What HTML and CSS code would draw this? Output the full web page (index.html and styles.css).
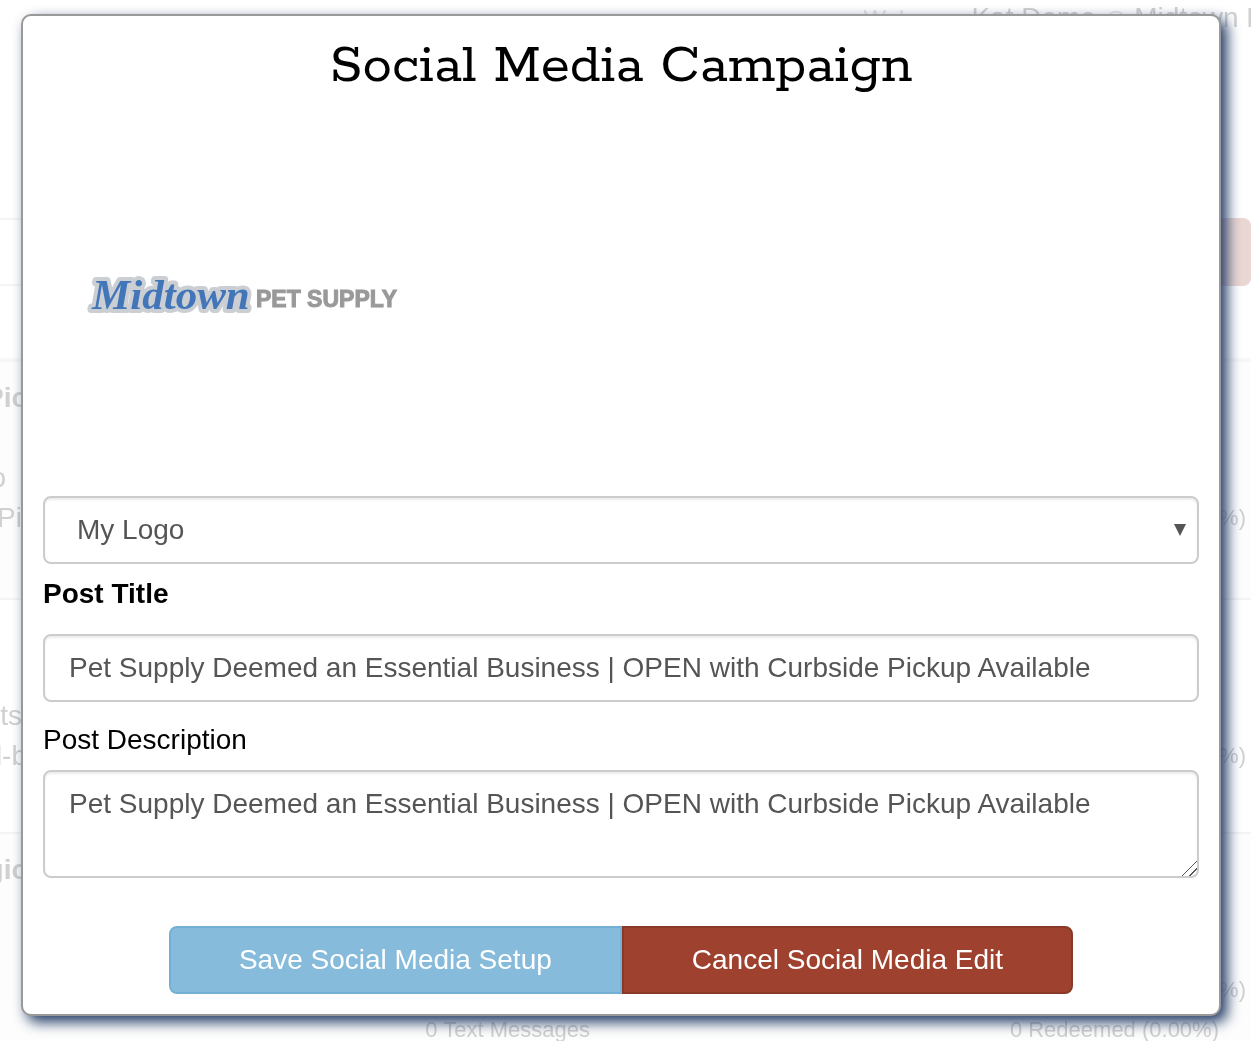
FILE: index.html
```
<!DOCTYPE html>
<html lang="en">
<head>
    <meta charset="UTF-8">
    <meta name="viewport" content="width=device-width, initial-scale=1.0">
    <title>Social Media Campaign</title>
    <link rel="stylesheet" href="styles.css">
</head>
<body>
    <!-- faded page behind the dialog -->
    <div class="backdrop" aria-hidden="true">
        <div class="welcome">
            <span class="greeting">Wel</span>
            <span>Kat Demo</span>
            <span class="at">@</span>
            <span class="store">Midtown P</span>
        </div>
        <div class="toolbar">
            <div class="toolbar-line"></div>
            <div class="toolbar-btn"></div>
        </div>
        <div class="campaign shaded first">
            <div class="row name"><span class="left wide">Pic</span></div>
            <div class="row"><span class="left short">o</span></div>
            <div class="row"><span class="left">Pi</span><span class="stat">%)</span></div>
        </div>
        <div class="campaign second">
            <div class="row"><span class="left">ts</span></div>
            <div class="row"><span class="left wide">l-b</span><span class="stat">%)</span></div>
        </div>
        <div class="campaign shaded third">
            <div class="row name"><span class="left wide">gic</span></div>
            <div class="row"><span class="left"></span><span class="stat">%)</span></div>
            <div class="totals"><span>0 Text Messages</span><span>0 Redeemed (0.00%)</span></div>
        </div>
    </div>

    <form class="modal" role="dialog" aria-labelledby="modalTitle">
        <h1 id="modalTitle">Social Media Campaign</h1>

        <svg class="logo" viewBox="0 0 360 360" role="img" aria-label="Midtown Pet Supply">
            <text class="logo-script" x="49" y="189">Midtown</text>
            <text class="logo-name" x="213" y="187">PET SUPPLY</text>
        </svg>

        <div class="select-wrap">
            <select class="field" aria-label="Image">
                <option>My Logo</option>
            </select>
        </div>

        <label class="title-label" for="postTitle">Post Title</label>
        <input class="field" type="text" id="postTitle" value="Pet Supply Deemed an Essential Business | OPEN with Curbside Pickup Available">

        <label class="desc-label" for="postDesc">Post Description</label>
        <textarea class="field" id="postDesc">Pet Supply Deemed an Essential Business | OPEN with Curbside Pickup Available</textarea>

        <div class="btn-group">
            <button type="button" class="btn btn-save">Save Social Media Setup</button>
            <button type="button" class="btn btn-cancel">Cancel Social Media Edit</button>
        </div>
    </form>
</body>
</html>
```
FILE: styles.css
```
* {
    margin: 0;
    padding: 0;
    box-sizing: border-box;
}

body {
    font-family: "Liberation Sans", Arial, sans-serif;
    font-size: 28px;
    line-height: 40px;
    color: #000;
    background: #fff;
}

/* page behind the dialog */
.backdrop {
    position: fixed;
    inset: 0;
    z-index: -1;
    overflow: hidden;
    color: #d0d0d0;
}

.welcome {
    display: flex;
    justify-content: flex-end;
    align-items: baseline;
    gap: 8px;
    height: 218px;
    margin-right: -14px;
    line-height: 36px;
    white-space: nowrap;
}

.greeting {
    width: 100px;
    font-size: 24px;
    color: #e4e4e4;
}

.at {
    font-size: 22px;
    color: #e4e4e4;
}

.toolbar {
    display: flex;
    height: 140px;
}

.toolbar-line {
    flex: 1;
    height: 68px;
    border-top: 2px solid #f4f4f4;
    border-bottom: 2px solid #f4f4f4;
}

.toolbar-btn {
    width: 120px;
    height: 68px;
    border-radius: 8px;
    background: #ead7d3;
}

.campaign {
    border-top: 2px solid #f4f4f4;
}

.shaded {
    background: #fdfdfd;
}

.first {
    height: 240px;
    padding-top: 16px;
    border-top: 4px solid #f7f7f7;
}

.second {
    height: 234px;
    padding-top: 96px;
}

.third {
    padding-top: 16px;
}

.row {
    display: flex;
    justify-content: space-between;
    padding-right: 5px;
}

.name {
    height: 80px;
    font-weight: bold;
}

.left {
    display: flex;
    justify-content: flex-end;
    width: 22px;
    white-space: nowrap;
}

.short {
    padding-right: 16px;
}

.wide {
    width: 27px;
}

.stat,
.totals {
    font-size: 22px;
}

.third .stat {
    padding-top: 40px;
}

.totals {
    display: flex;
    justify-content: space-between;
    padding: 0 32px 0 34%;
}

/* dialog */
.modal {
    margin: 14px 30px 24px 21px;
    padding: 20px;
    background: #fff;
    border: 2px solid #999;
    border-radius: 10px;
    box-shadow: 6px 6px 14px #1f3864;
}

h1 {
    font-family: Rokkitt, Rockwell, "DejaVu Serif", serif;
    font-size: 59px;
    font-weight: normal;
    line-height: 62px;
    text-align: center;
}

.logo {
    display: block;
    width: 360px;
    height: 360px;
    margin: 22px 0 16px;
}

.logo-script {
    font-family: "Liberation Serif", serif;
    font-size: 43px;
    font-style: italic;
    font-weight: bold;
    fill: #4276b8;
    stroke: #cbcfd4;
    stroke-width: 8px;
    stroke-linejoin: round;
    paint-order: stroke;
}

.logo-name {
    font-size: 23px;
    font-weight: bold;
    fill: #999;
    stroke: #999;
    stroke-width: 1px;
}

.field {
    display: block;
    width: 100%;
    height: 68px;
    padding: 12px 24px;
    font: inherit;
    color: #555;
    background: #fff;
    border: 2px solid #ccc;
    border-radius: 8px;
    box-shadow: inset 0 2px 2px rgba(0, 0, 0, 0.075);
}

.select-wrap {
    position: relative;
}

select.field {
    padding: 12px 32px;
    appearance: none;
}

.select-wrap::after {
    content: "";
    position: absolute;
    top: 28px;
    right: 13px;
    border: 6px solid transparent;
    border-top: 12px solid #555;
    border-bottom: 0;
    pointer-events: none;
}

textarea.field {
    height: 108px;
    resize: vertical;
}

textarea::-webkit-scrollbar {
    width: 18px;
    height: 18px;
}

textarea::-webkit-resizer {
    background: linear-gradient(135deg, transparent 49%, #555 49%, #555 53%, transparent 53%, transparent 73%, #555 73%, #555 77%, transparent 77%);
}

label {
    display: block;
}

.title-label {
    margin: 10px 0 20px;
    font-weight: bold;
}

.desc-label {
    margin: 18px 0 10px;
}

.btn-group {
    display: flex;
    justify-content: center;
    margin-top: 48px;
}

.btn {
    height: 68px;
    padding: 0 68px;
    font: inherit;
    color: #fff;
    border: 2px solid;
    cursor: pointer;
}

.btn-save {
    background: #87bbdb;
    border-color: #74b0d5;
    border-radius: 8px 0 0 8px;
}

.btn-cancel {
    background: #9e412e;
    border-color: #8a3828;
    border-radius: 0 8px 8px 0;
}
```
